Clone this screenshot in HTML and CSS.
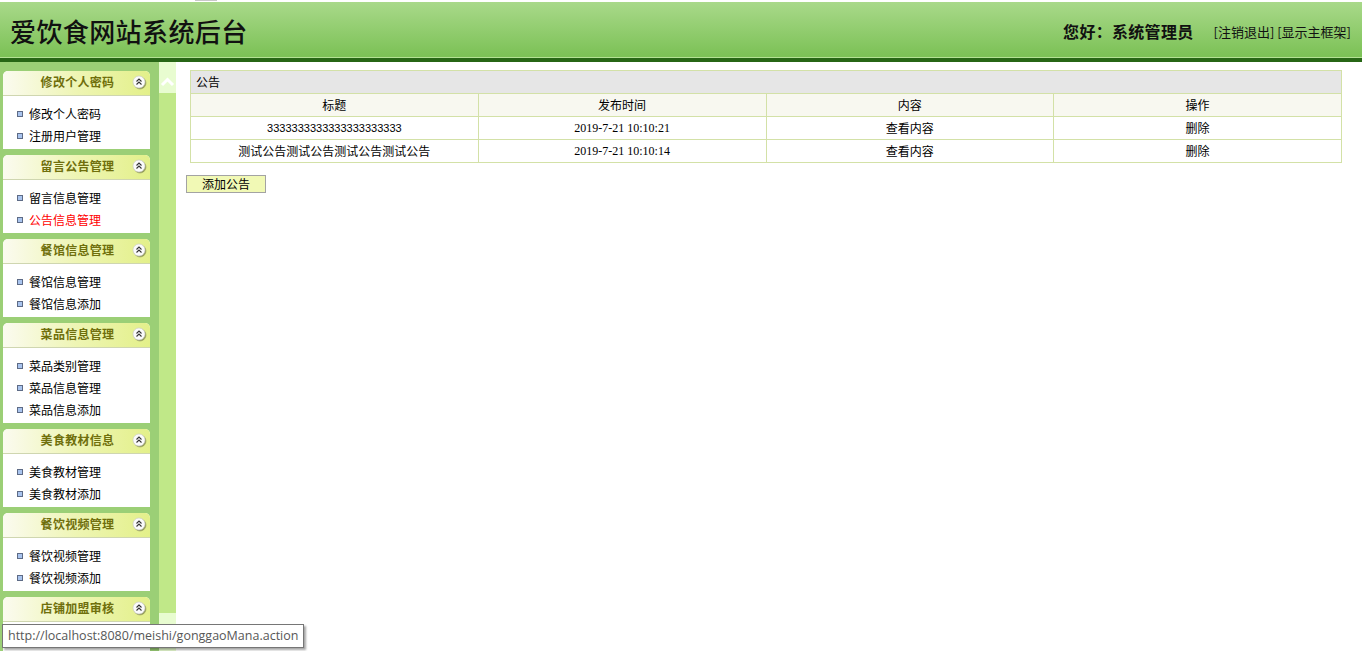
FILE: index.html
```html
<!DOCTYPE html>
<html lang="zh">
<head>
<meta charset="utf-8">
<title>爱饮食网站系统后台</title>
<link rel="stylesheet" href="styles.css">
</head>
<body>
<div class="topstrip"><span class="topmark"></span></div>
<header class="header">
  <h1 class="logo">爱饮食网站系统后台</h1>
  <div class="userbox">
    <span class="hello">您好：系统管理员</span>
    <span class="links">[注销退出]&nbsp;[显示主框架]</span>
  </div>
</header>
<div class="hline"></div>
<div class="main">
  <aside class="sidebar">
    <section class="panel">
      <div class="ptitle"><span>修改个人密码</span><i class="coll"><svg viewBox="0 0 14 14"><circle cx="7" cy="7" r="6" class="cbg"/><path d="M4.5 6.5L7 4L9.5 6.5M4.5 9.5L7 7L9.5 9.5" class="cch"/></svg></i></div>
      <ul class="plist"><li>修改个人密码</li><li>注册用户管理</li></ul>
    </section>
    <section class="panel">
      <div class="ptitle"><span>留言公告管理</span><i class="coll"><svg viewBox="0 0 14 14"><circle cx="7" cy="7" r="6" class="cbg"/><path d="M4.5 6.5L7 4L9.5 6.5M4.5 9.5L7 7L9.5 9.5" class="cch"/></svg></i></div>
      <ul class="plist"><li>留言信息管理</li><li class="on">公告信息管理</li></ul>
    </section>
    <section class="panel">
      <div class="ptitle"><span>餐馆信息管理</span><i class="coll"><svg viewBox="0 0 14 14"><circle cx="7" cy="7" r="6" class="cbg"/><path d="M4.5 6.5L7 4L9.5 6.5M4.5 9.5L7 7L9.5 9.5" class="cch"/></svg></i></div>
      <ul class="plist"><li>餐馆信息管理</li><li>餐馆信息添加</li></ul>
    </section>
    <section class="panel">
      <div class="ptitle"><span>菜品信息管理</span><i class="coll"><svg viewBox="0 0 14 14"><circle cx="7" cy="7" r="6" class="cbg"/><path d="M4.5 6.5L7 4L9.5 6.5M4.5 9.5L7 7L9.5 9.5" class="cch"/></svg></i></div>
      <ul class="plist"><li>菜品类别管理</li><li>菜品信息管理</li><li>菜品信息添加</li></ul>
    </section>
    <section class="panel">
      <div class="ptitle"><span>美食教材信息</span><i class="coll"><svg viewBox="0 0 14 14"><circle cx="7" cy="7" r="6" class="cbg"/><path d="M4.5 6.5L7 4L9.5 6.5M4.5 9.5L7 7L9.5 9.5" class="cch"/></svg></i></div>
      <ul class="plist"><li>美食教材管理</li><li>美食教材添加</li></ul>
    </section>
    <section class="panel">
      <div class="ptitle"><span>餐饮视频管理</span><i class="coll"><svg viewBox="0 0 14 14"><circle cx="7" cy="7" r="6" class="cbg"/><path d="M4.5 6.5L7 4L9.5 6.5M4.5 9.5L7 7L9.5 9.5" class="cch"/></svg></i></div>
      <ul class="plist"><li>餐饮视频管理</li><li>餐饮视频添加</li></ul>
    </section>
    <section class="panel">
      <div class="ptitle"><span>店铺加盟审核</span><i class="coll"><svg viewBox="0 0 14 14"><circle cx="7" cy="7" r="6" class="cbg"/><path d="M4.5 6.5L7 4L9.5 6.5M4.5 9.5L7 7L9.5 9.5" class="cch"/></svg></i></div>
      <div class="pbody-empty"></div>
    </section>
  </aside>
  <div class="toggle">
    <div class="tbtn"><svg viewBox="0 0 17 14" class="tup"><path d="M3 10L8.5 4.5L14 10"/></svg></div>
    <div class="tmid"></div>
    <div class="tbtn tbot"></div>
  </div>
  <main class="content">
    <table class="grid">
      <tr class="cap"><td colspan="4">公告</td></tr>
      <tr class="head"><td>标题</td><td>发布时间</td><td>内容</td><td>操作</td></tr>
      <tr><td class="num">3333333333333333333333</td><td class="date">2019-7-21 10:10:21</td><td>查看内容</td><td>删除</td></tr>
      <tr><td>测试公告测试公告测试公告测试公告</td><td class="date">2019-7-21 10:10:14</td><td>查看内容</td><td>删除</td></tr>
    </table>
    <button class="addbtn" type="button">添加公告</button>
  </main>
</div>
<div class="tooltip">http://localhost:8080/meishi/gonggaoMana.action</div>
</body>
</html>
```
FILE: styles.css
```css
html, body {
  margin: 0;
  padding: 0;
  height: 100%;
  overflow: hidden;
  background: #fff;
  font-family: "Noto Sans CJK SC", "Liberation Sans", sans-serif;
  font-size: 12px;
  color: #000;
}

.topstrip {
  height: 2px;
  background: #fff;
  display: flex;
}
.topmark {
  margin-left: 195px;
  width: 22px;
  height: 1px;
  background: #c8c8c8;
}

.header {
  height: 55px;
  background: linear-gradient(#a9d98a, #7bc155);
  display: flex;
  align-items: center;
  justify-content: space-between;
  padding: 3px 11px 0 10px;
  box-sizing: border-box;
}
.logo {
  margin: 0;
  font-size: 26px;
  font-weight: 500;
  letter-spacing: 0.4px;
  color: #111;
  line-height: 1;
}
.userbox {
  display: flex;
  align-items: center;
  gap: 20px;
}
.hello {
  font-size: 16px;
  font-weight: 700;
  color: #111;
  letter-spacing: 0.3px;
}
.links {
  font-size: 13px;
  color: #111;
}

.hline {
  height: 4px;
  border-top: 1px solid #b3e193;
  background: #276615;
}

.main {
  display: flex;
  height: calc(100vh - 62px);
}

.sidebar {
  width: 156px;
  flex: none;
  background: #9bcf76;
  padding: 9px 0 0 3px;
  overflow: hidden;
  display: flex;
  flex-direction: column;
  gap: 6px;
}
.panel {
  width: 147px;
  flex: none;
  background: #fff;
  border-radius: 5px 5px 0 0;
}
.ptitle {
  height: 25px;
  box-sizing: border-box;
  padding-bottom: 3px;
  border-bottom: 1px solid #cfd6b0;
  border-radius: 5px 5px 0 0;
  background: linear-gradient(90deg, #fbfbf0 0%, #eef5b4 50%, #e3f08a 100%);
  display: flex;
  align-items: center;
  justify-content: center;
  position: relative;
}
.ptitle span {
  font-size: 12px;
  font-weight: 700;
  letter-spacing: 0.3px;
  color: #6f6f0c;
  margin-left: 2px;
}
.coll {
  position: absolute;
  right: 4px;
  top: 4px;
  width: 14px;
  height: 14px;
  display: flex;
  filter: drop-shadow(1px 1px 0.5px rgba(0, 0, 0, 0.35));
}
.coll svg { width: 14px; height: 14px; }
.cbg { fill: #fbfbfb; stroke: #c8c8c8; stroke-width: 0.6; }
.cch { fill: none; stroke: #333; stroke-width: 1.1; }

.plist {
  list-style: none;
  margin: 0;
  padding: 7px 0 2px 14px;
}
.plist li {
  height: 22px;
  line-height: 22px;
  display: flex;
  align-items: center;
  gap: 6px;
}
.plist li::before {
  content: "";
  width: 4px;
  height: 4px;
  border: 1px solid #5e6b86;
  background: #a9c4ee;
  flex: none;
}
.plist li.on { color: #f00; }
.pbody-empty { height: 53px; }

.toggle {
  width: 17px;
  flex: none;
  display: flex;
  flex-direction: column;
}
.tbtn {
  height: 31px;
  box-sizing: border-box;
  padding-top: 13px;
  background: #e8fcd0;
  display: flex;
  align-items: flex-start;
  justify-content: center;
}
.tup { width: 17px; height: 14px; display: block; }
.tup path { fill: none; stroke: #fff; stroke-width: 3; }
.tmid {
  flex: 1;
  background: #c0e888;
}
.tbot { height: 38px; }

.content {
  flex: 1;
  padding: 8px 0 0 14px;
}
.grid {
  width: 1152px;
  border-collapse: collapse;
  table-layout: fixed;
}
.grid td {
  height: 21px;
  padding: 0 0 1px;
  border: 1px solid #d3e1a7;
  text-align: center;
  font-size: 12px;
  line-height: 20px;
}
.grid .cap td {
  background: #e6e6e6;
  text-align: left;
  padding-left: 5px;
}
.grid .head td {
  background: #f8f8f0;
}
.grid td.num {
  font-family: "Liberation Sans", sans-serif;
  font-size: 11px;
}
.grid td.date {
  font-family: "Liberation Serif", serif;
  font-size: 12px;
}

.addbtn {
  margin: 12px 0 0 -4px;
  width: 80px;
  height: 18px;
  padding: 0 0 1px;
  background: #f1f9b5;
  border: 1px solid #a3a3a3;
  font-family: "Noto Sans CJK SC", sans-serif;
  font-size: 12px;
  line-height: 15px;
  color: #000;
  display: block;
}

.tooltip {
  position: absolute;
  left: 2px;
  top: 624px;
  height: 22px;
  line-height: 22px;
  padding: 0 5px;
  background: #fff;
  border: 1px solid #767676;
  box-shadow: 2px 2px 2px rgba(0, 0, 0, 0.35);
  font-family: "Open Sans", "Liberation Sans", sans-serif;
  font-size: 12.5px;
  color: #575757;
  white-space: nowrap;
}
```
